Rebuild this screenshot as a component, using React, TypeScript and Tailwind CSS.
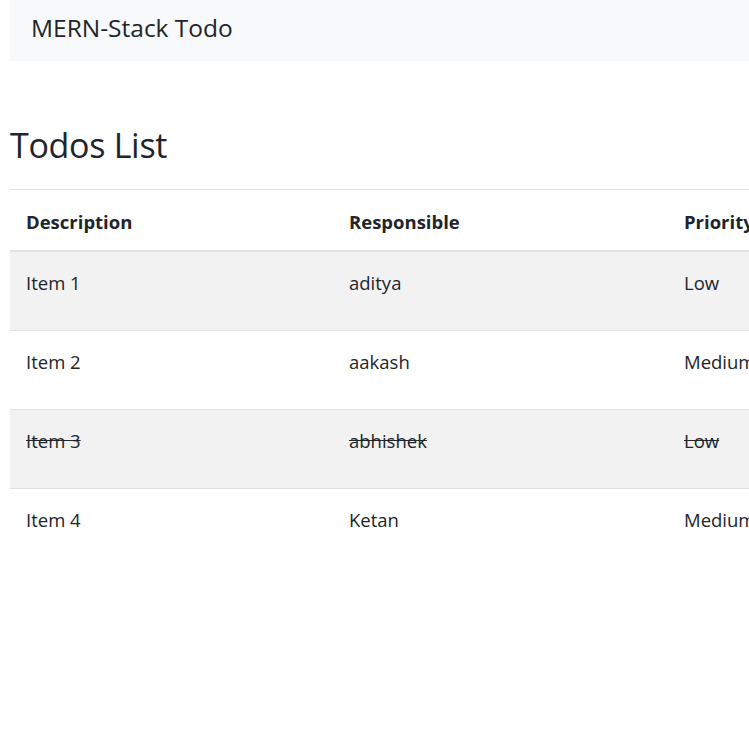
const todos = [
  { description: "Item 1", responsible: "aditya", priority: "Low", completed: false },
  { description: "Item 2", responsible: "aakash", priority: "Medium", completed: false },
  { description: "Item 3", responsible: "abhishek", priority: "Low", completed: true },
  { description: "Item 4", responsible: "Ketan", priority: "Medium", completed: false },
];

export default function App() {
  return (
    <div className="w-[749px] h-[749px] overflow-hidden bg-white text-[#212529] [font-family:'Open_Sans',sans-serif]">
      <div className="pl-[10px] w-[1100px]">
        <nav className="h-[61px] bg-[#f8f9fa] flex items-center px-[21px] pb-[4px]">
          <span className="text-[24.5px] leading-none">MERN-Stack Todo</span>
        </nav>
        <h3 className="mt-[64px] mb-[23px] text-[34px] leading-[1.2] font-medium tracking-[-0.3px]">Todos List</h3>
        <table className="w-full border-collapse text-[18.5px] text-left">
          <thead>
            <tr className="h-[62px] border-t border-[#dee2e6]">
              <th className="w-[323px] px-4 pb-[15px] align-bottom font-bold border-b-2 border-[#dee2e6]">Description</th>
              <th className="w-[335px] px-4 pb-[15px] align-bottom font-bold border-b-2 border-[#dee2e6]">Responsible</th>
              <th className="px-4 pb-[15px] align-bottom font-bold border-b-2 border-[#dee2e6]">Priority</th>
            </tr>
          </thead>
          <tbody>
            {todos.map((t, i) => (
              <tr
                key={t.description}
                className={`h-[79px] border-t border-[#dee2e6] ${i % 2 === 0 ? "bg-[#f2f2f2]" : "bg-white"} ${t.completed ? "line-through" : ""}`}
              >
                <td className="px-4 pt-[17px] align-top">{t.description}</td>
                <td className="px-4 pt-[17px] align-top">{t.responsible}</td>
                <td className="px-4 pt-[17px] align-top">{t.priority}</td>
              </tr>
            ))}
          </tbody>
        </table>
      </div>
    </div>
  );
}
